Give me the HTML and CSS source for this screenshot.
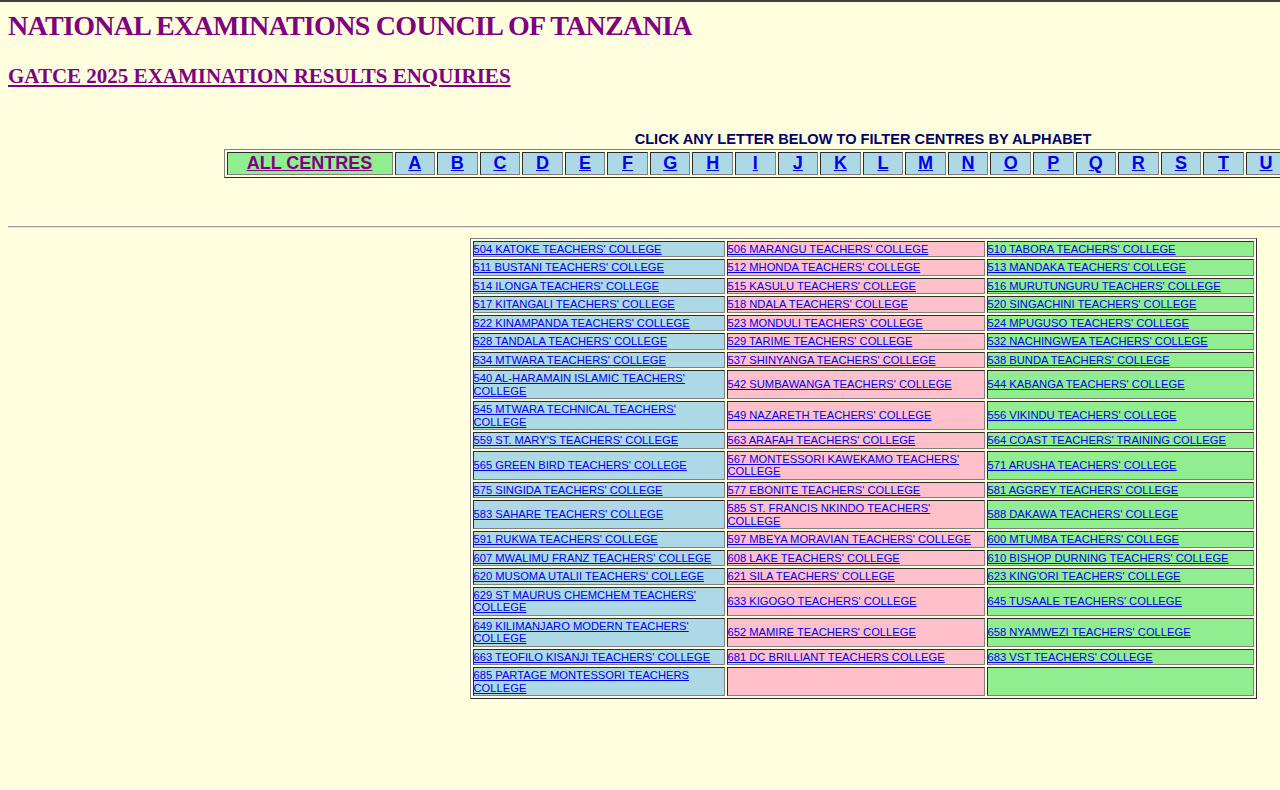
FILE: index.html
```html
<!DOCTYPE html>
<html>
<head>
<meta charset="utf-8">
<title>GATCE 2025 EXAMINATION RESULTS ENQUIRIES</title>
<link rel="stylesheet" href="styles.css">
</head>
<body>
<div class="frame">
<div class="page">
  <h1 class="title">NATIONAL EXAMINATIONS COUNCIL OF TANZANIA</h1>
  <h2 class="subtitle"><a href="#">GATCE 2025 EXAMINATION RESULTS ENQUIRIES</a></h2>
  <p class="hint">CLICK ANY LETTER BELOW TO FILTER CENTRES BY ALPHABET</p>
  <table class="letters">
    <tr>
      <td class="all"><a href="#">ALL CENTRES</a></td>
      <td class="ltr"><a href="#">A</a></td>
      <td class="ltr"><a href="#">B</a></td>
      <td class="ltr"><a href="#">C</a></td>
      <td class="ltr"><a href="#">D</a></td>
      <td class="ltr"><a href="#">E</a></td>
      <td class="ltr"><a href="#">F</a></td>
      <td class="ltr"><a href="#">G</a></td>
      <td class="ltr"><a href="#">H</a></td>
      <td class="ltr"><a href="#">I</a></td>
      <td class="ltr"><a href="#">J</a></td>
      <td class="ltr"><a href="#">K</a></td>
      <td class="ltr"><a href="#">L</a></td>
      <td class="ltr"><a href="#">M</a></td>
      <td class="ltr"><a href="#">N</a></td>
      <td class="ltr"><a href="#">O</a></td>
      <td class="ltr"><a href="#">P</a></td>
      <td class="ltr"><a href="#">Q</a></td>
      <td class="ltr"><a href="#">R</a></td>
      <td class="ltr"><a href="#">S</a></td>
      <td class="ltr"><a href="#">T</a></td>
      <td class="ltr"><a href="#">U</a></td>
      <td class="ltr"><a href="#">V</a></td>
      <td class="ltr"><a href="#">W</a></td>
      <td class="ltr"><a href="#">X</a></td>
      <td class="ltr"><a href="#">Y</a></td>
      <td class="ltr"><a href="#">Z</a></td>
    </tr>
  </table>
  <hr class="rule">
  <table class="centres">
    <tr><td class="c1"><a href="#">504 KATOKE TEACHERS' COLLEGE</a></td><td class="c2"><a href="#">506 MARANGU TEACHERS' COLLEGE</a></td><td class="c3"><a href="#">510 TABORA TEACHERS' COLLEGE</a></td></tr>
    <tr><td class="c1"><a href="#">511 BUSTANI TEACHERS' COLLEGE</a></td><td class="c2"><a href="#">512 MHONDA TEACHERS' COLLEGE</a></td><td class="c3"><a href="#">513 MANDAKA TEACHERS' COLLEGE</a></td></tr>
    <tr><td class="c1"><a href="#">514 ILONGA TEACHERS' COLLEGE</a></td><td class="c2"><a href="#">515 KASULU TEACHERS' COLLEGE</a></td><td class="c3"><a href="#">516 MURUTUNGURU TEACHERS' COLLEGE</a></td></tr>
    <tr><td class="c1"><a href="#">517 KITANGALI TEACHERS' COLLEGE</a></td><td class="c2"><a href="#">518 NDALA TEACHERS' COLLEGE</a></td><td class="c3"><a href="#">520 SINGACHINI TEACHERS' COLLEGE</a></td></tr>
    <tr><td class="c1"><a href="#">522 KINAMPANDA TEACHERS' COLLEGE</a></td><td class="c2"><a href="#">523 MONDULI TEACHERS' COLLEGE</a></td><td class="c3"><a href="#">524 MPUGUSO TEACHERS' COLLEGE</a></td></tr>
    <tr><td class="c1"><a href="#">528 TANDALA TEACHERS' COLLEGE</a></td><td class="c2"><a href="#">529 TARIME TEACHERS' COLLEGE</a></td><td class="c3"><a href="#">532 NACHINGWEA TEACHERS' COLLEGE</a></td></tr>
    <tr><td class="c1"><a href="#">534 MTWARA TEACHERS' COLLEGE</a></td><td class="c2"><a href="#">537 SHINYANGA TEACHERS' COLLEGE</a></td><td class="c3"><a href="#">538 BUNDA TEACHERS' COLLEGE</a></td></tr>
    <tr><td class="c1"><a href="#">540 AL-HARAMAIN ISLAMIC TEACHERS' COLLEGE</a></td><td class="c2"><a href="#">542 SUMBAWANGA TEACHERS' COLLEGE</a></td><td class="c3"><a href="#">544 KABANGA TEACHERS' COLLEGE</a></td></tr>
    <tr><td class="c1"><a href="#">545 MTWARA TECHNICAL TEACHERS' COLLEGE</a></td><td class="c2"><a href="#">549 NAZARETH TEACHERS' COLLEGE</a></td><td class="c3"><a href="#">556 VIKINDU TEACHERS' COLLEGE</a></td></tr>
    <tr><td class="c1"><a href="#">559 ST. MARY'S TEACHERS' COLLEGE</a></td><td class="c2"><a href="#">563 ARAFAH TEACHERS' COLLEGE</a></td><td class="c3"><a href="#">564 COAST TEACHERS' TRAINING COLLEGE</a></td></tr>
    <tr><td class="c1"><a href="#">565 GREEN BIRD TEACHERS' COLLEGE</a></td><td class="c2"><a href="#">567 MONTESSORI KAWEKAMO TEACHERS' COLLEGE</a></td><td class="c3"><a href="#">571 ARUSHA TEACHERS' COLLEGE</a></td></tr>
    <tr><td class="c1"><a href="#">575 SINGIDA TEACHERS' COLLEGE</a></td><td class="c2"><a href="#">577 EBONITE TEACHERS' COLLEGE</a></td><td class="c3"><a href="#">581 AGGREY TEACHERS' COLLEGE</a></td></tr>
    <tr><td class="c1"><a href="#">583 SAHARE TEACHERS' COLLEGE</a></td><td class="c2"><a href="#">585 ST. FRANCIS NKINDO TEACHERS' COLLEGE</a></td><td class="c3"><a href="#">588 DAKAWA TEACHERS' COLLEGE</a></td></tr>
    <tr><td class="c1"><a href="#">591 RUKWA TEACHERS' COLLEGE</a></td><td class="c2"><a href="#">597 MBEYA MORAVIAN TEACHERS' COLLEGE</a></td><td class="c3"><a href="#">600 MTUMBA TEACHERS' COLLEGE</a></td></tr>
    <tr><td class="c1"><a href="#">607 MWALIMU FRANZ TEACHERS' COLLEGE</a></td><td class="c2"><a href="#">608 LAKE TEACHERS' COLLEGE</a></td><td class="c3"><a href="#">610 BISHOP DURNING TEACHERS' COLLEGE</a></td></tr>
    <tr><td class="c1"><a href="#">620 MUSOMA UTALII TEACHERS' COLLEGE</a></td><td class="c2"><a href="#">621 SILA TEACHERS' COLLEGE</a></td><td class="c3"><a href="#">623 KING'ORI TEACHERS' COLLEGE</a></td></tr>
    <tr><td class="c1"><a href="#">629 ST MAURUS CHEMCHEM TEACHERS' COLLEGE</a></td><td class="c2"><a href="#">633 KIGOGO TEACHERS' COLLEGE</a></td><td class="c3"><a href="#">645 TUSAALE TEACHERS' COLLEGE</a></td></tr>
    <tr><td class="c1"><a href="#">649 KILIMANJARO MODERN TEACHERS' COLLEGE</a></td><td class="c2"><a href="#">652 MAMIRE TEACHERS' COLLEGE</a></td><td class="c3"><a href="#">658 NYAMWEZI TEACHERS' COLLEGE</a></td></tr>
    <tr><td class="c1"><a href="#">663 TEOFILO KISANJI TEACHERS' COLLEGE</a></td><td class="c2"><a href="#">681 DC BRILLIANT TEACHERS COLLEGE</a></td><td class="c3"><a href="#">683 VST TEACHERS' COLLEGE</a></td></tr>
    <tr><td class="c1"><a href="#">685 PARTAGE MONTESSORI TEACHERS COLLEGE</a></td><td class="c2">&nbsp;</td><td class="c3">&nbsp;</td></tr>
  </table>
</div>
</div>
</body>
</html>
```
FILE: styles.css
```css
html {
  border-top: 2px solid #404040;
  background: #ffffe0;
}

body {
  margin: 8px 0 0 8px;
  background: #ffffe0;
  font-family: "Liberation Serif", "Times New Roman", serif;
}

.frame {
  overflow: hidden;
}

.page {
  width: 1710px;
}

.title {
  margin: 0;
  font-size: 28px;
  letter-spacing: -0.7px;
  font-weight: bold;
  color: #800080;
}

.subtitle {
  margin: 22px 0 0;
  font-size: 21px;
  font-weight: bold;
}

.subtitle a {
  color: #800080;
  text-decoration: underline;
}

.hint {
  margin: 42px 0 0;
  text-align: center;
  font-family: "Liberation Sans", Arial, sans-serif;
  font-size: 14.6px;
  font-weight: bold;
  color: #000066;
}

.letters {
  margin: 2px auto 0;
  width: 1279px;
  table-layout: fixed;
  border: 1px outset #808080;
  border-spacing: 2px;
  font-family: "Liberation Sans", Arial, sans-serif;
  font-size: 18px;
  font-weight: bold;
}

.letters td {
  border: 1px inset #808080;
  padding: 0;
  line-height: 21px;
  text-align: center;
}

.letters a {
  color: #0000ee;
  text-decoration: underline;
}

.letters .all {
  width: 164px;
  background: #90ee90;
}

.letters .all a {
  color: #800080;
}

.letters .ltr {
  background: #add8e6;
}

.rule {
  margin: 48px 0 10px;
  border: 0;
  border-top: 1px solid #9a9a9a;
  border-bottom: 1px solid #e6e6e6;
  height: 0;
}

.centres {
  margin: 0 auto;
  width: 787px;
  table-layout: fixed;
  border: 1px outset #808080;
  border-spacing: 2px;
  font-family: "Liberation Sans", Arial, sans-serif;
  font-size: 11.2px;
}

.centres td {
  border: 1px inset #808080;
  padding: 0.9px 0;
  line-height: 12.65px;
  vertical-align: middle;
  text-align: left;
}

.centres a {
  color: #0000ee;
  text-decoration: underline;
}

.centres .c1 {
  width: 250px;
  background: #add8e6;
}

.centres .c2 {
  width: 256px;
  background: #ffc0cb;
}

.centres .c3 {
  width: 265px;
  background: #90ee90;
}
```
